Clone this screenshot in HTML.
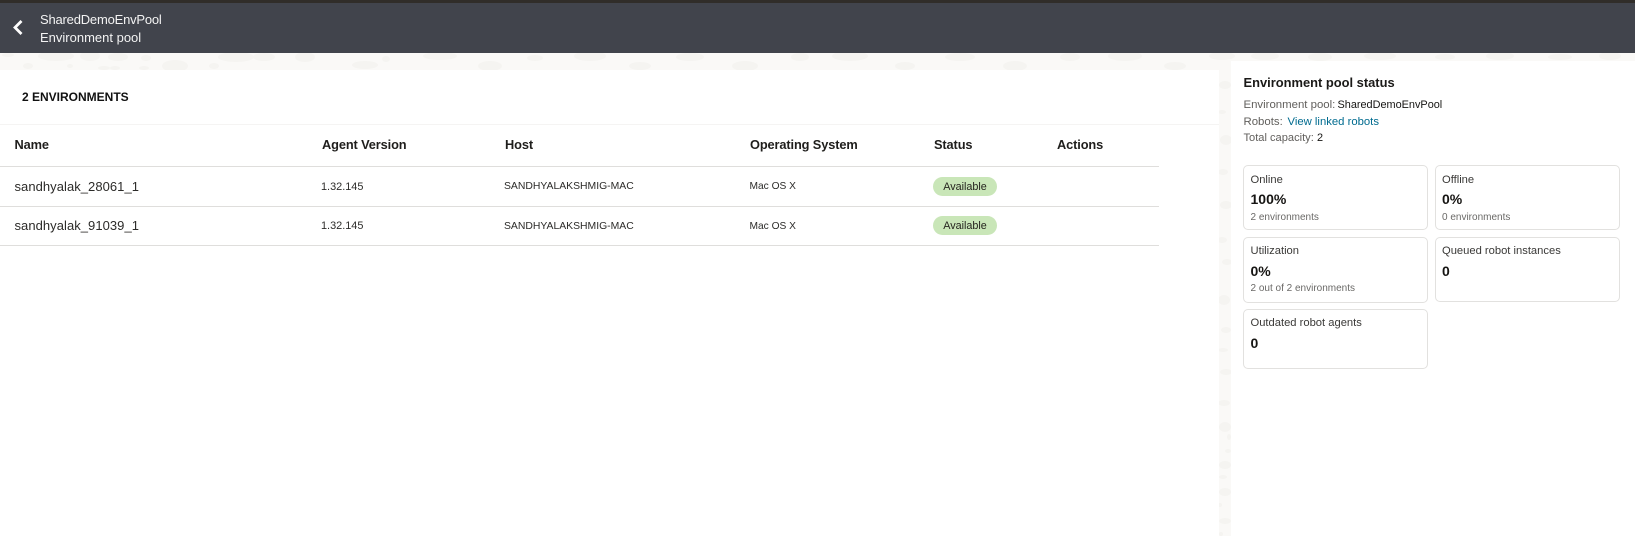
<!DOCTYPE html>
<html>
<head>
<meta charset="utf-8">
<title>Environment pool</title>
<style>
html,body{margin:0;padding:0;width:1635px;height:536px;overflow:hidden;background:#faf9f7;font-family:"Liberation Sans",sans-serif;color:#161513}
.t{position:absolute;white-space:nowrap;line-height:20px;height:20px}
.abs{position:absolute}
.card{position:absolute;box-sizing:border-box;background:#fff;border:1px solid #e2e1df;border-radius:5px}
.line{position:absolute;left:0;width:1159px;height:1px;background:#dfdedc}
.th{font-size:12.8px;font-weight:bold;color:#1f1e1c;letter-spacing:-.12px}
.name{font-size:13px;color:#2c2b29;letter-spacing:.05px}
.cell{font-size:10.9px;color:#2c2b29}
.host{font-size:10.4px;color:#2c2b29}
.os{font-size:10.2px;color:#2c2b29}
.badge{position:absolute;left:933px;width:64px;height:19px;border-radius:10px;background:#c9e6b8;font-size:10.8px;line-height:20px;text-align:center;color:#26251f}
.lab{font-size:11.2px;color:#3a3937}
.val{font-size:14px;font-weight:bold;color:#161513}
.sub{font-size:10px;color:#6a6967}
.g{color:#615f5c;font-size:11.4px}
.k{color:#161513;font-size:10.9px}
</style>
</head>
<body>
<svg class="abs" style="left:0;top:0" width="1635" height="536" viewBox="0 0 1635 536">
<rect width="1635" height="536" fill="#faf9f7"/>
<g fill="#f5f4f1">
<ellipse cx="8" cy="55" rx="6" ry="2"/><ellipse cx="56" cy="56" rx="18" ry="5"/><ellipse cx="90" cy="56" rx="10" ry="5"/><ellipse cx="118" cy="57" rx="10" ry="4"/><ellipse cx="146" cy="58" rx="5" ry="3"/><ellipse cx="175" cy="66" rx="13" ry="6"/><ellipse cx="214" cy="66" rx="5" ry="3"/><ellipse cx="236" cy="57" rx="18" ry="5"/><ellipse cx="264" cy="57" rx="11" ry="4"/><ellipse cx="305" cy="57" rx="10" ry="5"/><ellipse cx="365" cy="65" rx="13" ry="4"/><ellipse cx="386" cy="59" rx="4" ry="3"/><ellipse cx="28" cy="66" rx="5" ry="3"/><ellipse cx="70" cy="66" rx="3" ry="2"/><ellipse cx="104" cy="68" rx="6" ry="2"/><ellipse cx="115" cy="68" rx="5" ry="2"/><ellipse cx="144" cy="68" rx="5" ry="2"/>
<ellipse cx="440" cy="56" rx="17" ry="4"/><ellipse cx="490" cy="66" rx="12" ry="5"/><ellipse cx="535" cy="58" rx="8" ry="3"/><ellipse cx="590" cy="56" rx="16" ry="5"/><ellipse cx="640" cy="66" rx="11" ry="4"/><ellipse cx="690" cy="57" rx="14" ry="4"/><ellipse cx="745" cy="66" rx="13" ry="5"/><ellipse cx="800" cy="57" rx="9" ry="4"/><ellipse cx="850" cy="56" rx="18" ry="5"/><ellipse cx="905" cy="66" rx="10" ry="4"/><ellipse cx="960" cy="57" rx="15" ry="4"/><ellipse cx="1015" cy="66" rx="12" ry="5"/><ellipse cx="1070" cy="57" rx="10" ry="4"/><ellipse cx="1125" cy="56" rx="17" ry="5"/><ellipse cx="1175" cy="66" rx="11" ry="4"/><ellipse cx="1222" cy="56" rx="13" ry="4"/><ellipse cx="1265" cy="56" rx="14" ry="4"/><ellipse cx="1320" cy="57" rx="12" ry="4"/><ellipse cx="1380" cy="56" rx="16" ry="4"/><ellipse cx="1445" cy="57" rx="10" ry="3"/><ellipse cx="1500" cy="56" rx="14" ry="4"/><ellipse cx="1560" cy="57" rx="12" ry="3"/><ellipse cx="1610" cy="56" rx="11" ry="4"/>
<ellipse cx="1225" cy="85" rx="6" ry="4"/><ellipse cx="1222" cy="112" rx="4" ry="2"/><ellipse cx="1226" cy="140" rx="6" ry="5"/><ellipse cx="1223" cy="172" rx="5" ry="3"/><ellipse cx="1226" cy="205" rx="6" ry="4"/><ellipse cx="1222" cy="240" rx="5" ry="3"/><ellipse cx="1227" cy="262" rx="5" ry="3"/><ellipse cx="1224" cy="300" rx="6" ry="5"/><ellipse cx="1226" cy="330" rx="5" ry="3"/><ellipse cx="1223" cy="350" rx="5" ry="2"/><ellipse cx="1226" cy="372" rx="6" ry="3"/><ellipse cx="1224" cy="403" rx="6" ry="3"/><ellipse cx="1225" cy="427" rx="6" ry="5"/><ellipse cx="1229" cy="437" rx="2" ry="3"/><ellipse cx="1228" cy="451" rx="3" ry="2"/><ellipse cx="1225" cy="465" rx="6" ry="4"/><ellipse cx="1223" cy="477" rx="4" ry="2"/><ellipse cx="1225" cy="492" rx="6" ry="4"/><ellipse cx="1220" cy="505" rx="2" ry="2"/><ellipse cx="1225" cy="521" rx="6" ry="3"/><ellipse cx="1221" cy="534" rx="2" ry="2"/>
</g>
<rect x="0" y="70" width="1219" height="466" fill="#fff"/>
<rect x="1231" y="61" width="404" height="475" fill="#fff"/>
<rect x="0" y="0" width="1635" height="3" fill="#302d29"/>
<rect x="0" y="3" width="1635" height="50" fill="#41444c"/>
<rect x="0" y="124" width="1219" height="1" fill="#f5f4f3"/>
<path d="M21.5 21 L15 27.5 L21.5 34" fill="none" stroke="#fff" stroke-width="2.8"/>
</svg>

<div class="t" style="left:40px;top:10px;font-size:13px;letter-spacing:-.2px;color:#f3f3f3">SharedDemoEnvPool</div>
<div class="t" style="left:40px;top:28px;font-size:13px;letter-spacing:0;color:#f3f3f3">Environment pool</div>

<div class="t" style="left:22px;top:86.5px;font-size:12px;font-weight:bold;color:#111">2 ENVIRONMENTS</div>

<div class="t th" style="left:14.5px;top:134.5px">Name</div>
<div class="t th" style="left:322px;top:134.5px">Agent Version</div>
<div class="t th" style="left:505px;top:134.5px">Host</div>
<div class="t th" style="left:750px;top:134.5px">Operating System</div>
<div class="t th" style="left:934px;top:134.5px">Status</div>
<div class="t th" style="left:1057px;top:134.5px">Actions</div>

<div class="line" style="top:166px"></div>
<div class="line" style="top:206px"></div>
<div class="line" style="top:245px"></div>

<div class="t name" style="left:14.5px;top:177px">sandhyalak_28061_1</div>
<div class="t cell" style="left:321px;top:177px">1.32.145</div>
<div class="t host" style="left:504px;top:176.5px">SANDHYALAKSHMIG-MAC</div>
<div class="t os" style="left:749.5px;top:176.5px">Mac OS X</div>
<div class="badge" style="top:177px">Available</div>

<div class="t name" style="left:14.5px;top:216px">sandhyalak_91039_1</div>
<div class="t cell" style="left:321px;top:216px">1.32.145</div>
<div class="t host" style="left:504px;top:216.5px">SANDHYALAKSHMIG-MAC</div>
<div class="t os" style="left:749.5px;top:216.5px">Mac OS X</div>
<div class="badge" style="top:216px">Available</div>

<div class="t" style="left:1243.5px;top:72.5px;font-size:12.9px;font-weight:bold;color:#1b1a18">Environment pool status</div>
<div class="t g" style="left:1243.5px;top:94.5px">Environment pool:</div>
<div class="t k" style="left:1337.5px;top:94.5px">SharedDemoEnvPool</div>
<div class="t g" style="left:1243.5px;top:112px">Robots:</div>
<div class="t" style="left:1287.5px;top:112px;font-size:11.3px;color:#006b8f">View linked robots</div>
<div class="t g" style="left:1243.5px;top:128px;font-size:11.1px">Total capacity:</div>
<div class="t k" style="left:1317px;top:128px">2</div>

<div class="card" style="left:1243px;top:165px;width:185px;height:65px"></div>
<div class="card" style="left:1435px;top:165px;width:185px;height:65px"></div>
<div class="card" style="left:1243px;top:237px;width:185px;height:66px"></div>
<div class="card" style="left:1435px;top:237px;width:185px;height:65px"></div>
<div class="card" style="left:1243px;top:309px;width:185px;height:60px"></div>

<div class="t lab" style="left:1250.5px;top:169.5px">Online</div>
<div class="t val" style="left:1250.5px;top:189px">100%</div>
<div class="t sub" style="left:1250.5px;top:207.5px">2 environments</div>

<div class="t lab" style="left:1442px;top:169.5px">Offline</div>
<div class="t val" style="left:1442px;top:189px">0%</div>
<div class="t sub" style="left:1442px;top:207.5px">0 environments</div>

<div class="t lab" style="left:1250.5px;top:240.5px">Utilization</div>
<div class="t val" style="left:1250.5px;top:261px">0%</div>
<div class="t sub" style="left:1250.5px;top:278.5px">2 out of 2 environments</div>

<div class="t lab" style="left:1442px;top:240.5px">Queued robot instances</div>
<div class="t val" style="left:1442px;top:261px">0</div>

<div class="t lab" style="left:1250.5px;top:312.5px">Outdated robot agents</div>
<div class="t val" style="left:1250.5px;top:333px">0</div>
</body>
</html>
